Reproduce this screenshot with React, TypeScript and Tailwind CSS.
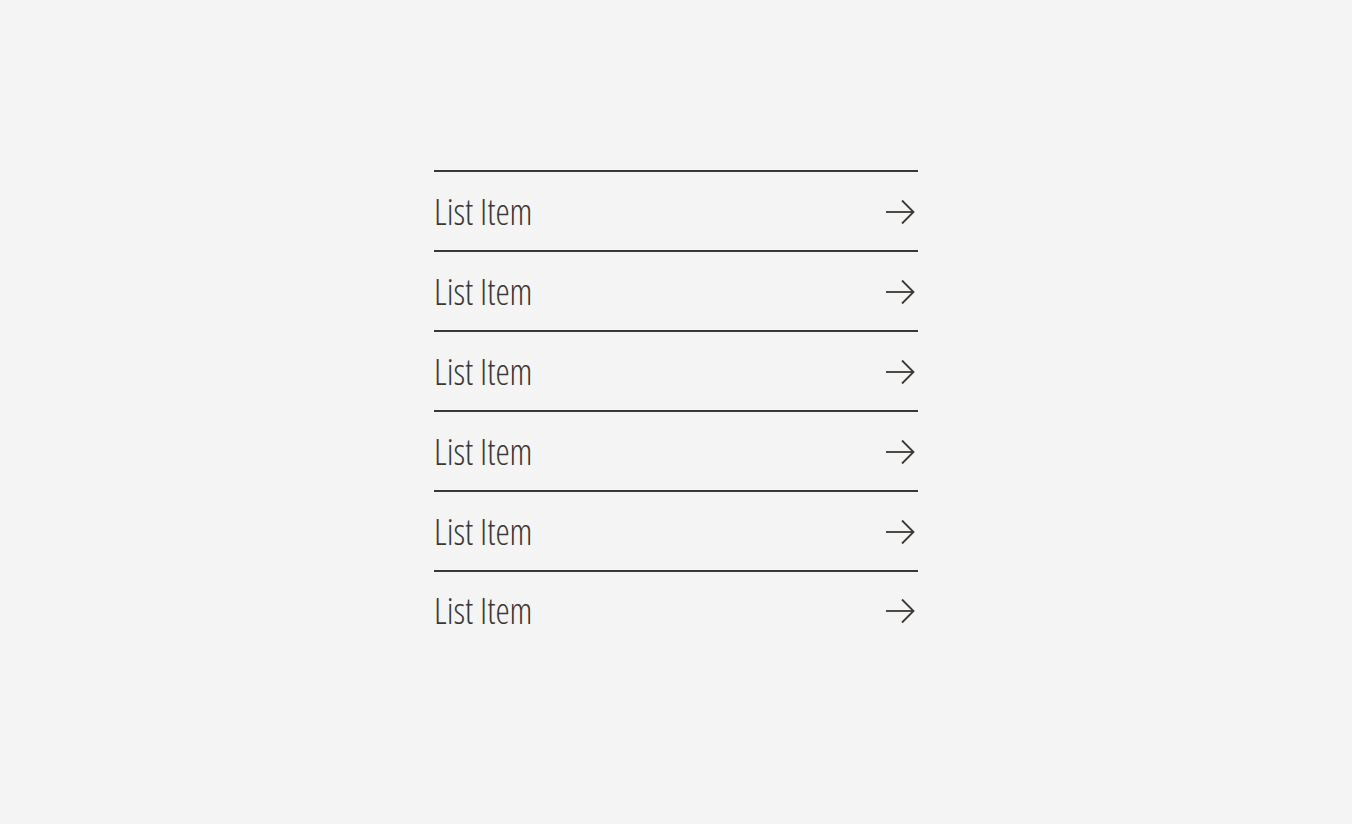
const items = ['List Item', 'List Item', 'List Item', 'List Item', 'List Item', 'List Item'];

const ArrowRight = () => (
  <svg
    width="30"
    height="26"
    viewBox="0 0 30 26"
    fill="none"
    stroke="currentColor"
    strokeWidth="1.8"
    className="mr-[3px] mb-[1px]"
  >
    <path d="M1 13H28" />
    <path d="M17 1.5L28.5 13L17 24.5" />
  </svg>
);

export default function App() {
  return (
    <div className="min-h-screen bg-[#f4f4f4] text-[#3a3734]">
      <ul className="mx-auto w-[484px] pt-[170px]">
        {items.map((label, i) => (
          <li
            key={i}
            className={
              i < items.length - 1
                ? 'flex h-[80px] items-center justify-between border-t-2 border-[#3a3734] pt-[2px]'
                : 'flex h-[80px] items-center justify-between border-y-2 border-t-[#3a3734] border-b-transparent pt-[2px]'
            }
          >
            <span className="font-['Open_Sans'] text-[36px] font-light leading-none [font-stretch:79%]">
              {label}
            </span>
            <ArrowRight />
          </li>
        ))}
      </ul>
    </div>
  );
}
